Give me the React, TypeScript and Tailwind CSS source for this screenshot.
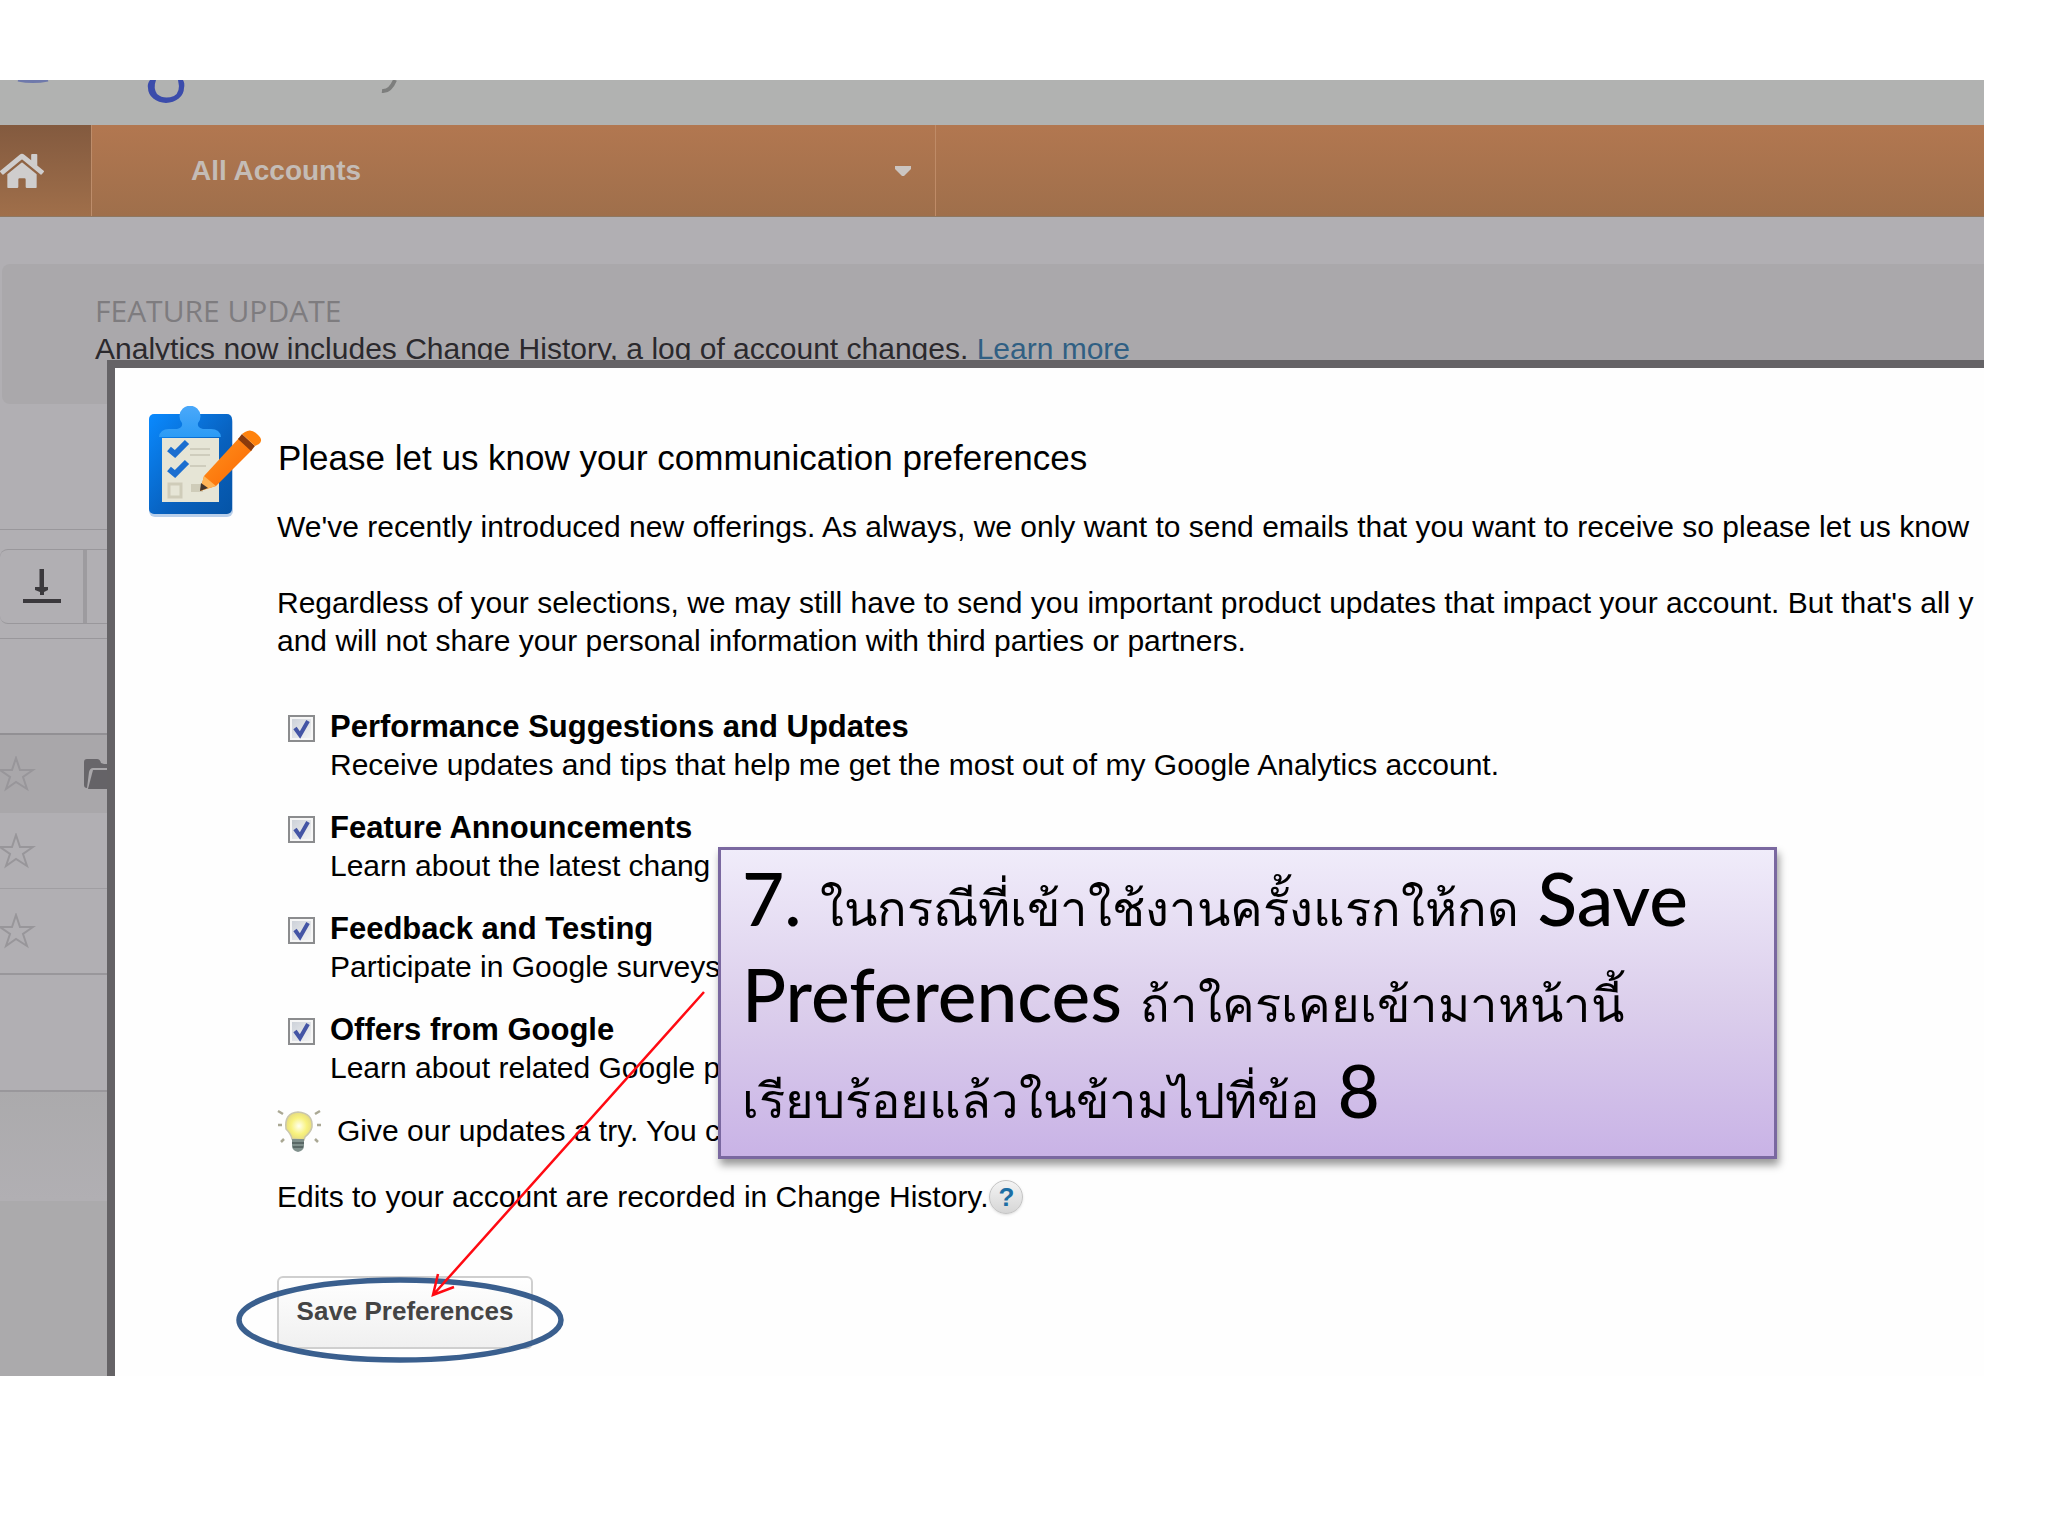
import { FaHome } from "react-icons/fa";

const OPTIONS = [
  {
    id: "performance",
    title: "Performance Suggestions and Updates",
    description:
      "Receive updates and tips that help me get the most out of my Google Analytics account.",
  },
  {
    id: "features",
    title: "Feature Announcements",
    description: "Learn about the latest chang",
  },
  {
    id: "feedback",
    title: "Feedback and Testing",
    description: "Participate in Google surveys",
  },
  {
    id: "offers",
    title: "Offers from Google",
    description: "Learn about related Google p",
  },
];

const StarIcon = () => (
  <svg viewBox="0 0 36 36" className="size-9 shrink-0" fill="none" stroke="#98969a" strokeWidth="2">
    <path d="M16 2 20 14H33L23 21 27 33 16 26 6 33 10 21 0 14H12Z" />
  </svg>
);

const FolderIcon = () => (
  <svg viewBox="0 0 36 30" className="h-[30px] w-9 shrink-0">
    <path d="M0 3Q0 0 3 0H13Q16 0 17 4L20 5H33V9H9Q6 9 5 13L3 29Q0 29 0 26Z" fill="#68666a" />
    <path d="M9 11H36V30H4Z" fill="#656367" />
  </svg>
);

const DownloadIcon = () => (
  <svg viewBox="0 0 40 36" className="h-9 w-10">
    <path d="M17.500 0H22V18H26V21L22 23V26H18V23L13 21V18H17.500Z" fill="#3b393d" />
    <path d="M1 30H39V34H1Z" fill="#3b393d" />
  </svg>
);

const ClipboardIcon = () => (
  <svg viewBox="0 0 116 112" className="h-28 w-[116px] shrink-0">
    <defs>
      <linearGradient id="board" x1="0" y1="0" x2="1" y2="1">
        <stop offset="0" stopColor="#0a8aff" />
        <stop offset="0.600" stopColor="#0860bd" />
        <stop offset="1" stopColor="#0554a6" />
      </linearGradient>
      <linearGradient id="clip" x1="0" y1="0" x2="0" y2="1">
        <stop offset="0" stopColor="#4aa8fa" />
        <stop offset="1" stopColor="#2b9bf5" />
      </linearGradient>
      <linearGradient id="pencil" x1="0" y1="0" x2="1" y2="1">
        <stop offset="0" stopColor="#ff9420" />
        <stop offset="1" stopColor="#fb6500" />
      </linearGradient>
    </defs>
    <rect x="2" y="10" width="84" height="101" rx="6" fill="#b9cfea" />
    <rect x="2" y="8" width="83" height="100" rx="5" fill="url(#board)" />
    <rect x="15" y="32" width="57" height="64" fill="#e6e5d6" />
    <path d="M12 31Q13 23 22 23H30Q36 22 35 17A10.500 10.500 0 1 1 51 17Q50 22 56 23H64Q73 23 74 31Z" fill="url(#clip)" />
    <path d="M22 43 28 48 40 36M22 63 28 68 40 56" fill="none" stroke="#1c6fd0" strokeWidth="6" />
    <path d="M43 43H63M43 49H63M43 60H59" stroke="#cfcdbd" strokeWidth="2" />
    <rect x="22" y="78" width="12" height="13" fill="none" stroke="#cfccb9" strokeWidth="3" />
    <rect x="44" y="78" width="12" height="8" fill="#cfccb9" />
    <path d="M53 85 57 70 92 32 105 44 69 80Z" fill="url(#pencil)" />
    <path d="M53 85 57 70 69 80Z" fill="#ffb457" />
    <path d="M53 85 54 77 61 82Z" fill="#43352c" />
    <path d="M91 33 95 28 108 40 104 45Z" fill="#8a3a0c" />
    <path d="M95 28 98 26Q104 22 110 28 117 34 112 38L108 40Z" fill="#ff820d" />
  </svg>
);

const BulbIcon = () => (
  <svg viewBox="0 0 44 44" className="size-11 shrink-0">
    <defs>
      <radialGradient id="glow">
        <stop offset="0" stopColor="#fffff0" />
        <stop offset="0.600" stopColor="#f8f27e" />
        <stop offset="1" stopColor="#e6dc80" />
      </radialGradient>
    </defs>
    <path d="M15 30Q14 25 9 20Q7 4 21 3Q36 4 35 18 34 23 28 28L27 31Z" fill="url(#glow)" stroke="#c9c6ae" strokeWidth="1.500" />
    <path d="M15 30H27V38Q26 42 21 43 16 42 15 38Z" fill="#80908c" />
    <path d="M15 34H27M16 38H26" stroke="#5a6866" strokeWidth="2" />
    <path d="M1 2 6 5M43 2 38 5M1 16H5M40 16H44M4 33 7 30M41 33 38 30" stroke="#aaa894" strokeWidth="2.500" />
  </svg>
);

const Backdrop = () => (
  <div className="col-start-1 row-start-1 flex min-w-0 flex-col bg-[#abaaac]">
    <div className="flex h-[45px] items-end overflow-hidden bg-[#b1b2b1]">
      <svg viewBox="0 0 420 45" className="h-[45px] w-[420px]" fill="none">
        <path d="M18 0Q33 3 48 0" stroke="#6f79ab" strokeWidth="3" />
        <path d="M148 8A18 15 0 0 0 184 8Q185 3 183 0H178Q181 12 174 16 164 20 157 14 153 8 156 0H150Q147 4 148 8Z" fill="#3b4cab" />
        <path d="M395 0Q390 12 382 11" stroke="#7d7e7d" strokeWidth="4" />
      </svg>
    </div>

    <nav className="flex h-[92px] border-b border-[#8f7760] bg-linear-to-b from-[#b27750] to-[#9f6f4b]">
      <a href="#home" aria-label="Home" className="flex w-[92px] items-center border-r border-[#bd8d6b] bg-linear-to-b from-[#835a3f] to-[#a06f4a]">
        <FaHome className="size-11 text-[#cfcdcd]" />
      </a>
      <button className="flex w-[844px] items-center justify-between border-r border-[#bf8b67] pl-[99px] pr-[24px] text-[28px] font-bold text-[#c4bcb6]">
        All Accounts
        <svg viewBox="0 0 16 10" className="h-[10px] w-4" fill="#cbc5c1">
          <path d="M0 0H16V3L9 10H7L0 3Z" />
        </svg>
      </button>
    </nav>

    <div className="h-[983px] bg-[#b1afb3] pt-[47px]">
      <div className="ml-[2px] h-[140px] rounded-l-lg bg-[#aaa8ab] pl-[93px] pt-7 whitespace-nowrap">
        <p className="font-['Open_Sans'] text-[30px] leading-[38px] text-[#7e7c7f]">FEATURE UPDATE</p>
        <p className="text-[30px] leading-[38px] text-[#2b292d]">
          Analytics now includes Change History, a log of account changes.{" "}
          <a href="#learn" className="text-[#305f83]">Learn more</a>
        </p>
      </div>
      <div className="mt-[125px] border-y border-[#99979b] pb-[14px] pt-[19px]">
        <div className="flex h-[75px] w-full rounded-l-lg border-y border-[#99979b]">
          <button aria-label="Download" className="flex w-[87px] items-center justify-center border-r-4 border-[#9d9b9f]">
            <DownloadIcon />
          </button>
        </div>
      </div>
      <div className="h-[96px] border-b-2 border-[#929094]" />
      <div className="flex h-[78px] items-center gap-12 bg-[#a9a7aa]">
        <StarIcon />
        <FolderIcon />
      </div>
      <div className="flex h-[76px] items-center border-b border-[#a09ea2]">
        <StarIcon />
      </div>
      <div className="flex h-[86px] items-center border-b-2 border-[#99979b]">
        <StarIcon />
      </div>
      <div className="h-[117px] border-b-2 border-[#99979b]" />
      <div className="h-[109px] bg-linear-to-b from-[#abaaac] to-[#b1afb3]" />
      <div className="h-20 bg-[#abaaac]" />
    </div>
  </div>
);

const PreferencesDialog = () => (
  <div
    role="dialog"
    className="relative z-10 col-start-1 row-start-1 ml-[107px] mt-[280px] min-w-0 border-l-8 border-t-8 border-[#656366] bg-[#fefefe] pb-[27px] pl-[32px] pt-[38px] text-[30px] leading-[38px] whitespace-nowrap text-black"
  >
    <div className="flex h-[102px] gap-[15px]">
      <ClipboardIcon />
      <h1 className="pt-[33px] text-[35px] leading-[38px]">
        Please let us know your communication preferences
      </h1>
    </div>

    <div className="pl-[130px]">
      <p>
        We've recently introduced new offerings. As always, we only want to send emails that you want to receive so please let us know
      </p>
      <p className="mt-[38px]">
        Regardless of your selections, we may still have to send you important product updates that impact your account. But that's all y
        <br />
        and will not share your personal information with third parties or partners.
      </p>

      <div className="mt-12 flex flex-col gap-[25px] pl-[11px]">
        {OPTIONS.map((option) => (
          <label key={option.id} className="flex gap-[15px]">
            <span className="relative mt-[7px] size-[27px] shrink-0">
              <input
                type="checkbox"
                defaultChecked
                className="peer block size-[27px] appearance-none border-2 border-[#8b8c8e] bg-linear-to-br from-[#c9ced6] to-[#f6f6f6] shadow-[inset_0_0_0_2px_#f6f6f6]"
              />
              <svg
                viewBox="0 0 27 27"
                className="pointer-events-none absolute inset-0 hidden peer-checked:block"
                fill="none"
                stroke="#4455a5"
                strokeWidth="4"
              >
                <path d="M7 13 12 20 20 6" />
              </svg>
            </span>
            <span>
              <span className="block text-[31px] font-bold">{option.title}</span>
              <span className="block">{option.description}</span>
            </span>
          </label>
        ))}
      </div>

      <div className="mt-[22px] flex items-center gap-4">
        <BulbIcon />
        <p>Give our updates a try. You c</p>
      </div>

      <div className="mt-[25px] flex items-center gap-px">
        <p>Edits to your account are recorded in Change History.</p>
        <button aria-label="Help" className="flex size-[34px] items-center justify-center rounded-full border border-[#c4c4c4] bg-linear-to-b from-[#f4f4f4] to-[#d6d6d6] text-[26px] font-bold text-[#1c6ea4] shadow">
          ?
        </button>
      </div>

      <button className="mt-[60px] flex h-[73px] w-[256px] justify-center rounded-md border-2 border-[#cfcfcf] bg-linear-to-b from-white to-[#f0f0f0] pt-[14px] text-[26px] leading-[38px] font-bold text-[#444]">
        Save Preferences
      </button>
    </div>
  </div>
);

const Callout = () => (
  <div className="absolute left-[718px] top-[847px] z-20 h-[312px] w-[1059px] border-[3px] border-[#7a68a0] bg-linear-to-b from-[#f0ecfa] via-[#dccfec] to-[#c9b3e6] pl-[21px] font-[Lato,sans-serif] text-[73px] leading-[96px] font-medium whitespace-nowrap text-black shadow-[2px_6px_8px_rgba(0,0,0,0.4)]">
    <p className="h-24">
      7. <span lang="th" className="text-[49px] font-light">ในกรณีที่เข้าใช้งานครั้งแรกให้กด</span> Save
    </p>
    <p className="h-24">
      Preferences <span lang="th" className="text-[49px] font-light">ถ้าใครเคยเข้ามาหน้านี้</span>
    </p>
    <p className="h-24">
      <span lang="th" className="text-[49px] font-light">เรียบร้อยแล้วในข้ามไปที่ข้อ</span> 8
    </p>
  </div>
);

const Annotations = () => (
  <svg
    viewBox="0 0 480 390"
    className="pointer-events-none absolute left-[230px] top-[980px] z-20 h-[390px] w-[480px]"
    fill="none"
  >
    <ellipse cx="170" cy="340" rx="161" ry="40" stroke="#3a5f8e" strokeWidth="5.500" />
    <path d="M474 12 203 315M208 294 203 315 224 307" stroke="#ff0a12" strokeWidth="2.500" />
  </svg>
);

const App = () => {
  return (
    <main className="relative min-h-screen bg-white py-20 pr-16 font-['Liberation_Sans',Arial,sans-serif]">
      <section className="grid grid-cols-1 overflow-hidden">
        <Backdrop />
        <PreferencesDialog />
      </section>
      <Callout />
      <Annotations />
    </main>
  );
};

export default App;
